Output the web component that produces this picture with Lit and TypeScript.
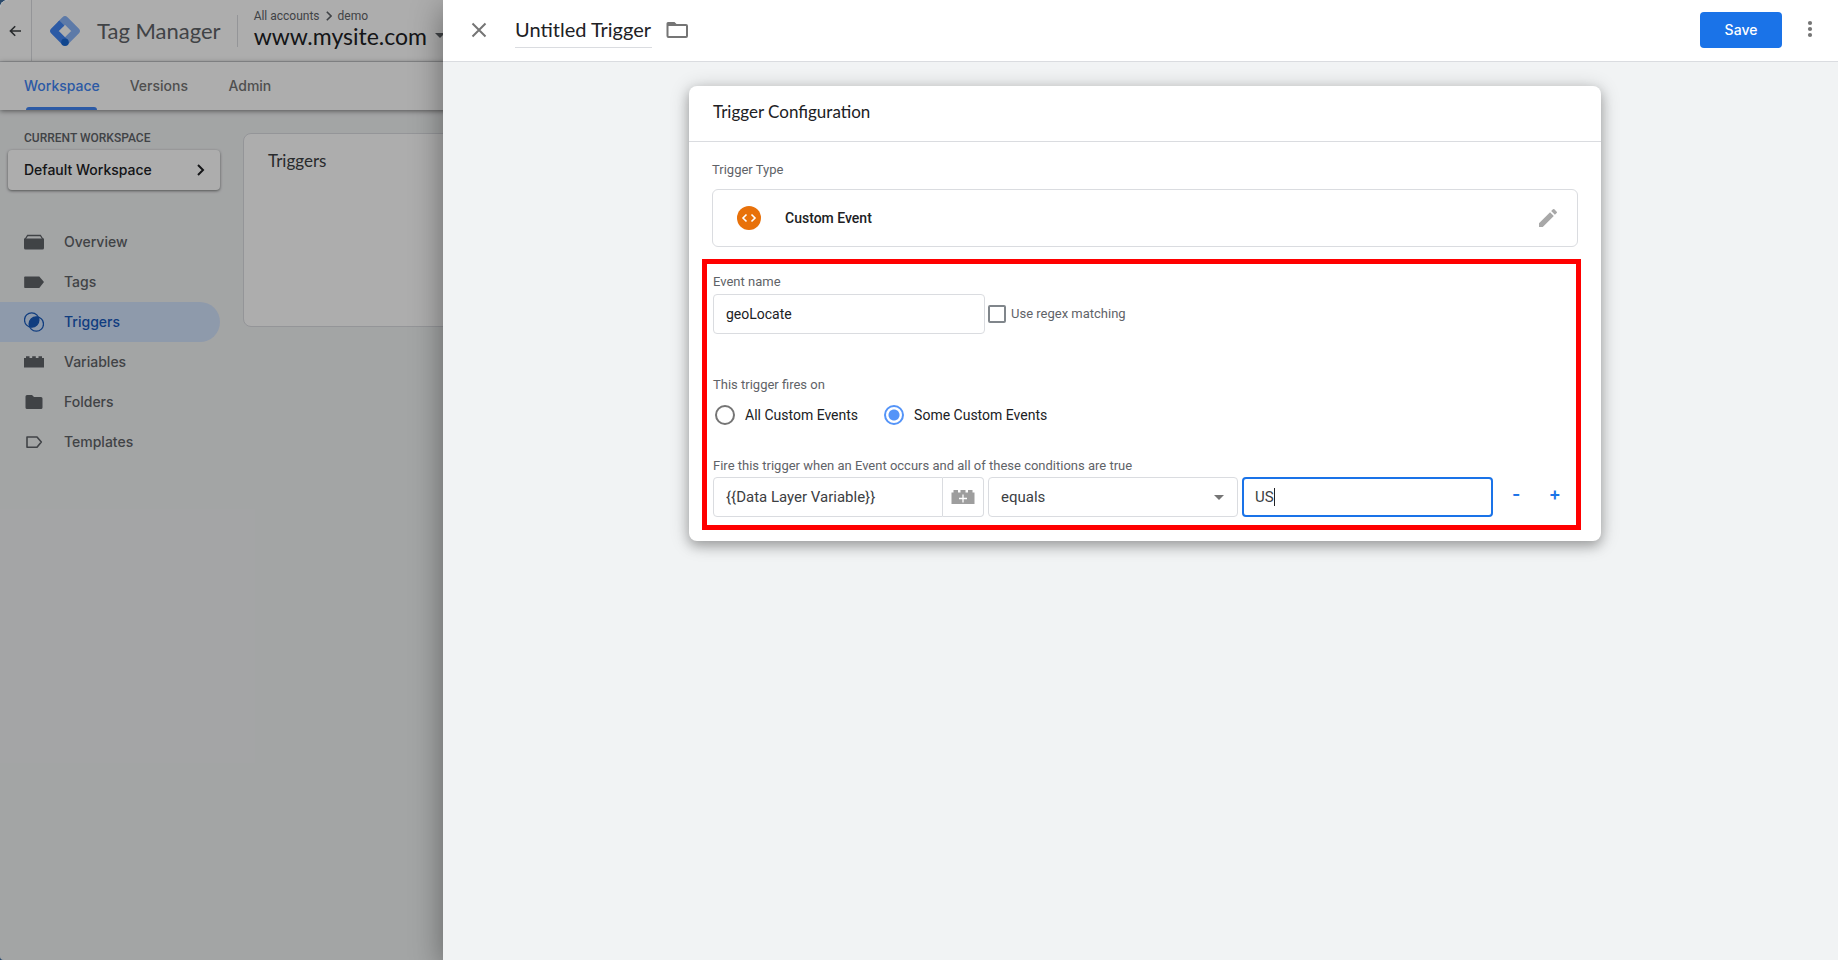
import { LitElement, html, css, svg, type SVGTemplateResult } from "lit";
import { customElement, query, state } from "lit/decorators.js";
import { classMap } from "lit/directives/class-map.js";

const navIcons: Record<string, SVGTemplateResult> = {
  overview: svg`<path d="M2 8.500h20V18a1.500 1.500 0 0 1-1.500 1.500h-17A1.500 1.500 0 0 1 2 18z"/><path d="M3 9.500 5.600 5.500h12.800L21 9.500" fill="none" stroke="currentColor" stroke-width="1.300"/>`,
  tags: svg`<path d="M3 6.500h14.300L22 12l-4.700 6H3a.8.8 0 0 1-.8-.8V7.300a.8.8 0 0 1 .8-.8z"/>`,
  triggers: svg`<g fill="none" stroke="currentColor" stroke-width="1.300"><circle cx="9.700" cy="10" r="7.200"/><circle cx="14.300" cy="14" r="7.200"/></g><path d="M7.720 16.920A7.200 7.200 0 0 1 16.280 7.080 7.200 7.200 0 0 1 7.720 16.920z"/>`,
  variables: svg`<path d="M2 8h2V6.200h3.500V8h2.700V6.200h3.600V8h2.700V6.200H20V8h2v9.500H2z"/>`,
  folders: svg`<path d="M10 5H5a1.500 1.500 0 0 0-1.500 1.500v11A1.500 1.500 0 0 0 5 19h14a1.500 1.500 0 0 0 1.500-1.500V8.500A1.500 1.500 0 0 0 19 7h-7z"/>`,
  templates: svg`<path d="M5 7h10l4.300 5L15 17.300H5z" fill="none" stroke="currentColor" stroke-width="1.600" stroke-linejoin="round"/>`,
};

const navItems = [
  { id: "overview", label: "Overview" },
  { id: "tags", label: "Tags" },
  { id: "triggers", label: "Triggers" },
  { id: "variables", label: "Variables" },
  { id: "folders", label: "Folders" },
  { id: "templates", label: "Templates" },
];

@customElement("workspace-page")
class WorkspacePage extends LitElement {
  static styles = css`
    :host { display: flex; flex-direction: column; isolation: isolate; background: #f1f3f4; color: #5f6368; font: 500 14px/20px Inter, Roboto, sans-serif; }
    * { box-sizing: border-box; }
    a { color: inherit; text-decoration: none; }
    button { font: inherit; color: inherit; background: none; border: 0; padding: 0; }
    svg { display: block; fill: currentColor; flex: none; }
    .line { fill: none; }
    .topbar { display: flex; align-items: center; flex: none; height: 62px; background: #fff; border-bottom: 1px solid #dadce0; }
    .back { display: flex; align-items: center; justify-content: flex-end; width: 32px; height: 100%; padding-right: 9px; border-right: 1px solid #dadce0; color: #3c4043; }
    .logo { margin: 0 16px 0 17px; }
    .product { font: 400 22px/28px Lato, Roboto, sans-serif; }
    .divider { width: 1px; height: 32px; margin: 0 16px; background: #dadce0; }
    .account { padding-bottom: 6px; }
    .crumbs { display: flex; align-items: center; gap: 6px; font: 400 12px/16px Roboto, sans-serif; }
    .site { display: flex; align-items: center; gap: 8px; color: #202124; font: 400 23px/24px Lato, Roboto, sans-serif; }
    .site svg { color: #5f6368; }
    .tabs { display: flex; flex: none; gap: 27px; height: 48px; padding-left: 24px; background: #fff; color: #757575; box-shadow: 0 1px 5px rgba(0, 0, 0, 0.5); z-index: 1; }
    .tab { display: flex; flex-direction: column; align-items: center; min-width: 64px; padding-top: 14px; }
    .tab.active { color: #4285f4; }
    .tab.active::after { content: ""; width: 71px; height: 3px; margin-top: auto; border-radius: 3px 3px 0 0; background: currentColor; }
    .columns { display: flex; flex: 1; }
    .side { flex: none; width: 220px; padding-top: 20px; }
    .caption { padding-left: 24px; font: 500 12px/16px Roboto, sans-serif; }
    .picker { display: flex; align-items: center; justify-content: space-between; width: 212px; height: 40px; margin: 4px 0 0 8px; padding: 0 14px 0 16px; border-radius: 4px; background: #fff; color: #202124; box-shadow: 0 1px 3px rgba(0, 0, 0, 0.5); }
    .nav { display: flex; flex-direction: column; margin-top: 32px; }
    .item { display: flex; align-items: center; gap: 20px; height: 40px; padding-left: 24px; border-radius: 0 20px 20px 0; }
    .item.active { background: #d2e3fc; color: #185abc; }
    .main { flex: 1; padding: 23px 24px 0 23px; }
    .card { height: 194px; padding: 16px 24px; border: 1px solid #dadce0; border-radius: 8px; background: #fff; }
    .card h2 { margin: 0; color: #3c4043; font: 400 17px/22px Lato, Roboto, sans-serif; }
  `;

  render() {
    return html`
      <header class="topbar">
        <button class="back" aria-label="Back">
          <svg class="line" width="14" height="14" viewBox="0 0 14 14" stroke="currentColor" stroke-width="1.600"><path d="M13 7H3M7.200 2.200 2.400 7l4.800 4.800"/></svg>
        </button>
        <svg class="logo line" width="32" height="32" viewBox="-16 -16 32 32" stroke-width="7.200" stroke-linejoin="round">
          <path d="M-5-6.200 0-11.200 11.200 0 0 11.200" stroke="#8ab4f8"/>
          <path d="M-3.200-8-11.200 0 0 11.200" stroke="#4285f4"/>
          <circle cx="0" cy="11.200" r="3.800" fill="#1967d2"/>
        </svg>
        <span class="product">Tag Manager</span>
        <span class="divider"></span>
        <div class="account">
          <nav class="crumbs" aria-label="Account">
            <a href="#accounts">All accounts</a>
            <svg class="line" width="6" height="10" viewBox="0 0 6 10" stroke="currentColor" stroke-width="1.600"><path d="M.8.8 5 5 .8 9.200"/></svg>
            <a href="#demo">demo</a>
          </nav>
          <button class="site">www.mysite.com
            <svg width="10" height="5" viewBox="0 0 10 5"><path d="M0 0h10L5 5z"/></svg>
          </button>
        </div>
      </header>
      <nav class="tabs" aria-label="Sections">
        <a class="tab active" href="#workspace">Workspace</a>
        <a class="tab" href="#versions">Versions</a>
        <a class="tab" href="#admin">Admin</a>
      </nav>
      <div class="columns">
        <aside class="side">
          <div class="caption">CURRENT WORKSPACE</div>
          <button class="picker">Default Workspace
            <svg class="line" width="10" height="14" viewBox="0 0 10 14" stroke="currentColor" stroke-width="2"><path d="M2 2l5 5-5 5"/></svg>
          </button>
          <nav class="nav" aria-label="Workspace">
            ${navItems.map(
              (item) => html`<a class=${classMap({ item: true, active: item.id === "triggers" })} href="#${item.id}">
                <svg width="20" height="20" viewBox="2 2 20 20">${navIcons[item.id]}</svg>${item.label}
              </a>`
            )}
          </nav>
        </aside>
        <main class="main"><section class="card"><h2>Triggers</h2></section></main>
      </div>
    `;
  }
}

@customElement("trigger-editor")
class TriggerEditor extends LitElement {
  @state() private scope = "some";
  @query(".value") private valueInput!: HTMLInputElement;

  static styles = css`
    :host { display: flex; flex-direction: column; background: #f1f3f4; color: #202124; font: 400 14px/20px Roboto, sans-serif; }
    * { box-sizing: border-box; }
    button { display: flex; align-items: center; justify-content: center; margin: 0; padding: 0; border: 0; background: none; font: inherit; color: #757575; }
    input, select { margin: 0; font: inherit; color: inherit; }
    svg { display: block; fill: currentColor; flex: none; }
    h2 { margin: 0; }
    .bar { display: flex; align-items: center; flex: none; height: 62px; padding: 0 16px 2px 24px; background: #fff; border-bottom: 1px solid #dadce0; }
    .title { width: 137px; height: 36px; margin: 0 12px 0 24px; padding: 0; border: 0; border-bottom: 1px solid #dadce0; outline: 0; background: none; font: 400 20px/24px Lato, Roboto, sans-serif; }
    .save { width: 82px; height: 36px; margin: 0 16px 0 auto; border-radius: 4px; background: #1a73e8; color: #fff; font: 500 14px/20px Inter, Roboto, sans-serif; }
    .body { flex: 1; padding: 24px 16px 24px 25px; }
    .card { max-width: 912px; margin: 0 auto; border-radius: 8px; background: #fff; box-shadow: 0 5px 12px rgba(0, 0, 0, 0.25), 0 2px 20px rgba(0, 0, 0, 0.2); }
    .card h2 { height: 56px; padding: 15px 24px; border-bottom: 1px solid #dadce0; font: 400 17px/22px Lato, Roboto, sans-serif; }
    .fields { padding: 20px 20px 11px 13px; }
    .label { display: block; padding: 0; color: #5f6368; font-size: 13px; line-height: 16px; }
    .type { margin: 0 3px 12px 10px; }
    .choice { display: flex; align-items: center; height: 58px; margin-top: 11px; padding: 0 17px 0 24px; border: 1px solid #dadce0; border-radius: 6px; }
    .choice strong { flex: 1; padding-left: 24px; font-weight: 500; }
    .choice button { color: #a8a8a8; }
    .highlight { padding: 10px 2px 8px 6px; border: 5px solid #f00; }
    .event { display: flex; align-items: center; gap: 3px; margin: 4px 0 43px; }
    .box { height: 40px; padding: 0 12px; border: 1px solid #dadce0; border-radius: 4px; outline: 0; background: #fff; min-width: 0; }
    .event .box { width: 272px; }
    .regex { display: flex; align-items: center; gap: 5px; }
    .check { appearance: none; width: 18px; height: 18px; border: 2px solid #80868b; border-radius: 2px; }
    fieldset { margin: 0; padding: 0; border: 0; min-width: 0; }
    .radios { display: flex; gap: 26px; margin: 12px 0 33px; padding-left: 2px; }
    .radio { display: flex; align-items: center; gap: 10px; }
    .radio input { appearance: none; width: 20px; height: 20px; border: 2px solid #757575; border-radius: 50%; }
    .radio input:checked { border-color: #5494f8; background: radial-gradient(circle, #5494f8 5px, #fff 6px); }
    .row { display: grid; grid-template-columns: 271fr 250fr 251fr 77fr; gap: 4px; margin-top: 3px; color: #3c4043; font-size: 15px; }
    .variable { display: flex; }
    .variable .box { flex: 1; border-radius: 4px 0 0 4px; }
    .variable button { width: 41px; height: 40px; border: 1px solid #dadce0; border-left: 0; border-radius: 0 4px 4px 0; color: #9e9e9e; }
    .operator { position: relative; }
    .operator select { appearance: none; width: 100%; }
    .operator svg { position: absolute; right: 14px; top: 18px; color: #757575; pointer-events: none; }
    .value { border: 2px solid #1a73e8; padding: 0 11px; caret-color: transparent; background: linear-gradient(#202124, #202124) 30px 50% / 1px 18px no-repeat #fff; }
    .actions { display: grid; grid-template-columns: 1fr 1fr; height: 34px; }
    .actions button { color: #1a73e8; font: 600 18px/20px Inter, Roboto, sans-serif; }
  `;

  firstUpdated() {
    this.valueInput.focus();
    this.valueInput.setSelectionRange(2, 2);
  }

  private radio(id: string, text: string) {
    return html`<label class="radio">
      <input type="radio" name="scope" .checked=${this.scope === id} @change=${() => (this.scope = id)} />${text}
    </label>`;
  }

  render() {
    return html`
      <header class="bar">
        <button aria-label="Close">
          <svg width="24" height="24" viewBox="0 0 24 24" stroke="currentColor" stroke-width="2"><path d="M5.500 5.500l13 13M18.500 5.500l-13 13"/></svg>
        </button>
        <input class="title" aria-label="Trigger name" value="Untitled Trigger" />
        <button aria-label="Choose folder">
          <svg width="26" height="24" viewBox="0 0 26 24"><path d="M4 4h6.500l2 2H22a2 2 0 0 1 2 2v10a2 2 0 0 1-2 2H4.500a2 2 0 0 1-2-2V5.500A1.500 1.500 0 0 1 4 4zm.5 4v10H22V8z"/></svg>
        </button>
        <button class="save">Save</button>
        <button aria-label="More actions">
          <svg width="24" height="24" viewBox="0 0 24 24"><circle cx="12" cy="5" r="2.100"/><circle cx="12" cy="11" r="2.100"/><circle cx="12" cy="17" r="2.100"/></svg>
        </button>
      </header>
      <div class="body">
        <section class="card">
          <h2>Trigger Configuration</h2>
          <div class="fields">
            <div class="type">
              <span class="label">Trigger Type</span>
              <div class="choice">
                <svg width="24" height="24" viewBox="0 0 24 24"><circle cx="12" cy="12" r="12" fill="#e8710a"/><path d="M9.500 8.500 6 12l3.500 3.500M14.500 8.500 18 12l-3.500 3.500" fill="none" stroke="#fff" stroke-width="1.600"/></svg>
                <strong>Custom Event</strong>
                <button aria-label="Edit trigger type">
                  <svg width="24" height="24" viewBox="0 0 24 24"><path d="M3 17.250V21h3.750L17.810 9.940l-3.750-3.750zM20.710 7.040a1 1 0 0 0 0-1.410l-2.340-2.340a1 1 0 0 0-1.410 0l-1.830 1.830 3.750 3.750z"/></svg>
                </button>
              </div>
            </div>
            <div class="highlight">
              <label class="label" for="event-name">Event name</label>
              <div class="event">
                <input class="box" id="event-name" value="geoLocate" />
                <label class="label regex"><input class="check" type="checkbox" />Use regex matching</label>
              </div>
              <fieldset>
                <legend class="label">This trigger fires on</legend>
                <div class="radios">${this.radio("all", "All Custom Events")}${this.radio("some", "Some Custom Events")}</div>
              </fieldset>
              <fieldset>
                <legend class="label">Fire this trigger when an Event occurs and all of these conditions are true</legend>
                <div class="row">
                  <div class="variable">
                    <input class="box" aria-label="Variable" value="{{Data Layer Variable}}" />
                    <button aria-label="Insert variable">
                      <svg width="24" height="14" viewBox="0 0 24 14"><path d="M.5 2.500h2V0H7v2.500h2.500V0h5v2.500H17V0h4.500v2.500h2V14H.5z"/><path d="M12 4.500v8M8 8.500h8" stroke="#fff" stroke-width="1.300"/></svg>
                    </button>
                  </div>
                  <div class="operator">
                    <select class="box" aria-label="Operator"><option>equals</option><option>contains</option></select>
                    <svg width="10" height="5" viewBox="0 0 10 5"><path d="M0 0h10L5 5z"/></svg>
                  </div>
                  <input class="box value" aria-label="Value" value="US" />
                  <div class="actions">
                    <button aria-label="Remove condition">-</button>
                    <button aria-label="Add condition">+</button>
                  </div>
                </div>
              </fieldset>
            </div>
          </div>
        </section>
      </div>
    `;
  }
}

@customElement("app-root")
class AppRoot extends LitElement {
  static styles = css`
    :host { display: block; position: relative; height: 100vh; overflow: hidden; background: #2b4a6b; }
    .page, .scrim { position: absolute; inset: 0; border-radius: 8px 0 0 4px; overflow: hidden; }
    .scrim { background: rgba(0, 0, 0, 0.32); }
    .drawer { position: absolute; inset: 0 0 0 443px; box-shadow: 0 8px 30px rgba(0, 0, 0, 0.4); }
  `;

  render() {
    return html`
      <workspace-page class="page"></workspace-page>
      <div class="scrim"></div>
      <trigger-editor class="drawer"></trigger-editor>
    `;
  }
}
